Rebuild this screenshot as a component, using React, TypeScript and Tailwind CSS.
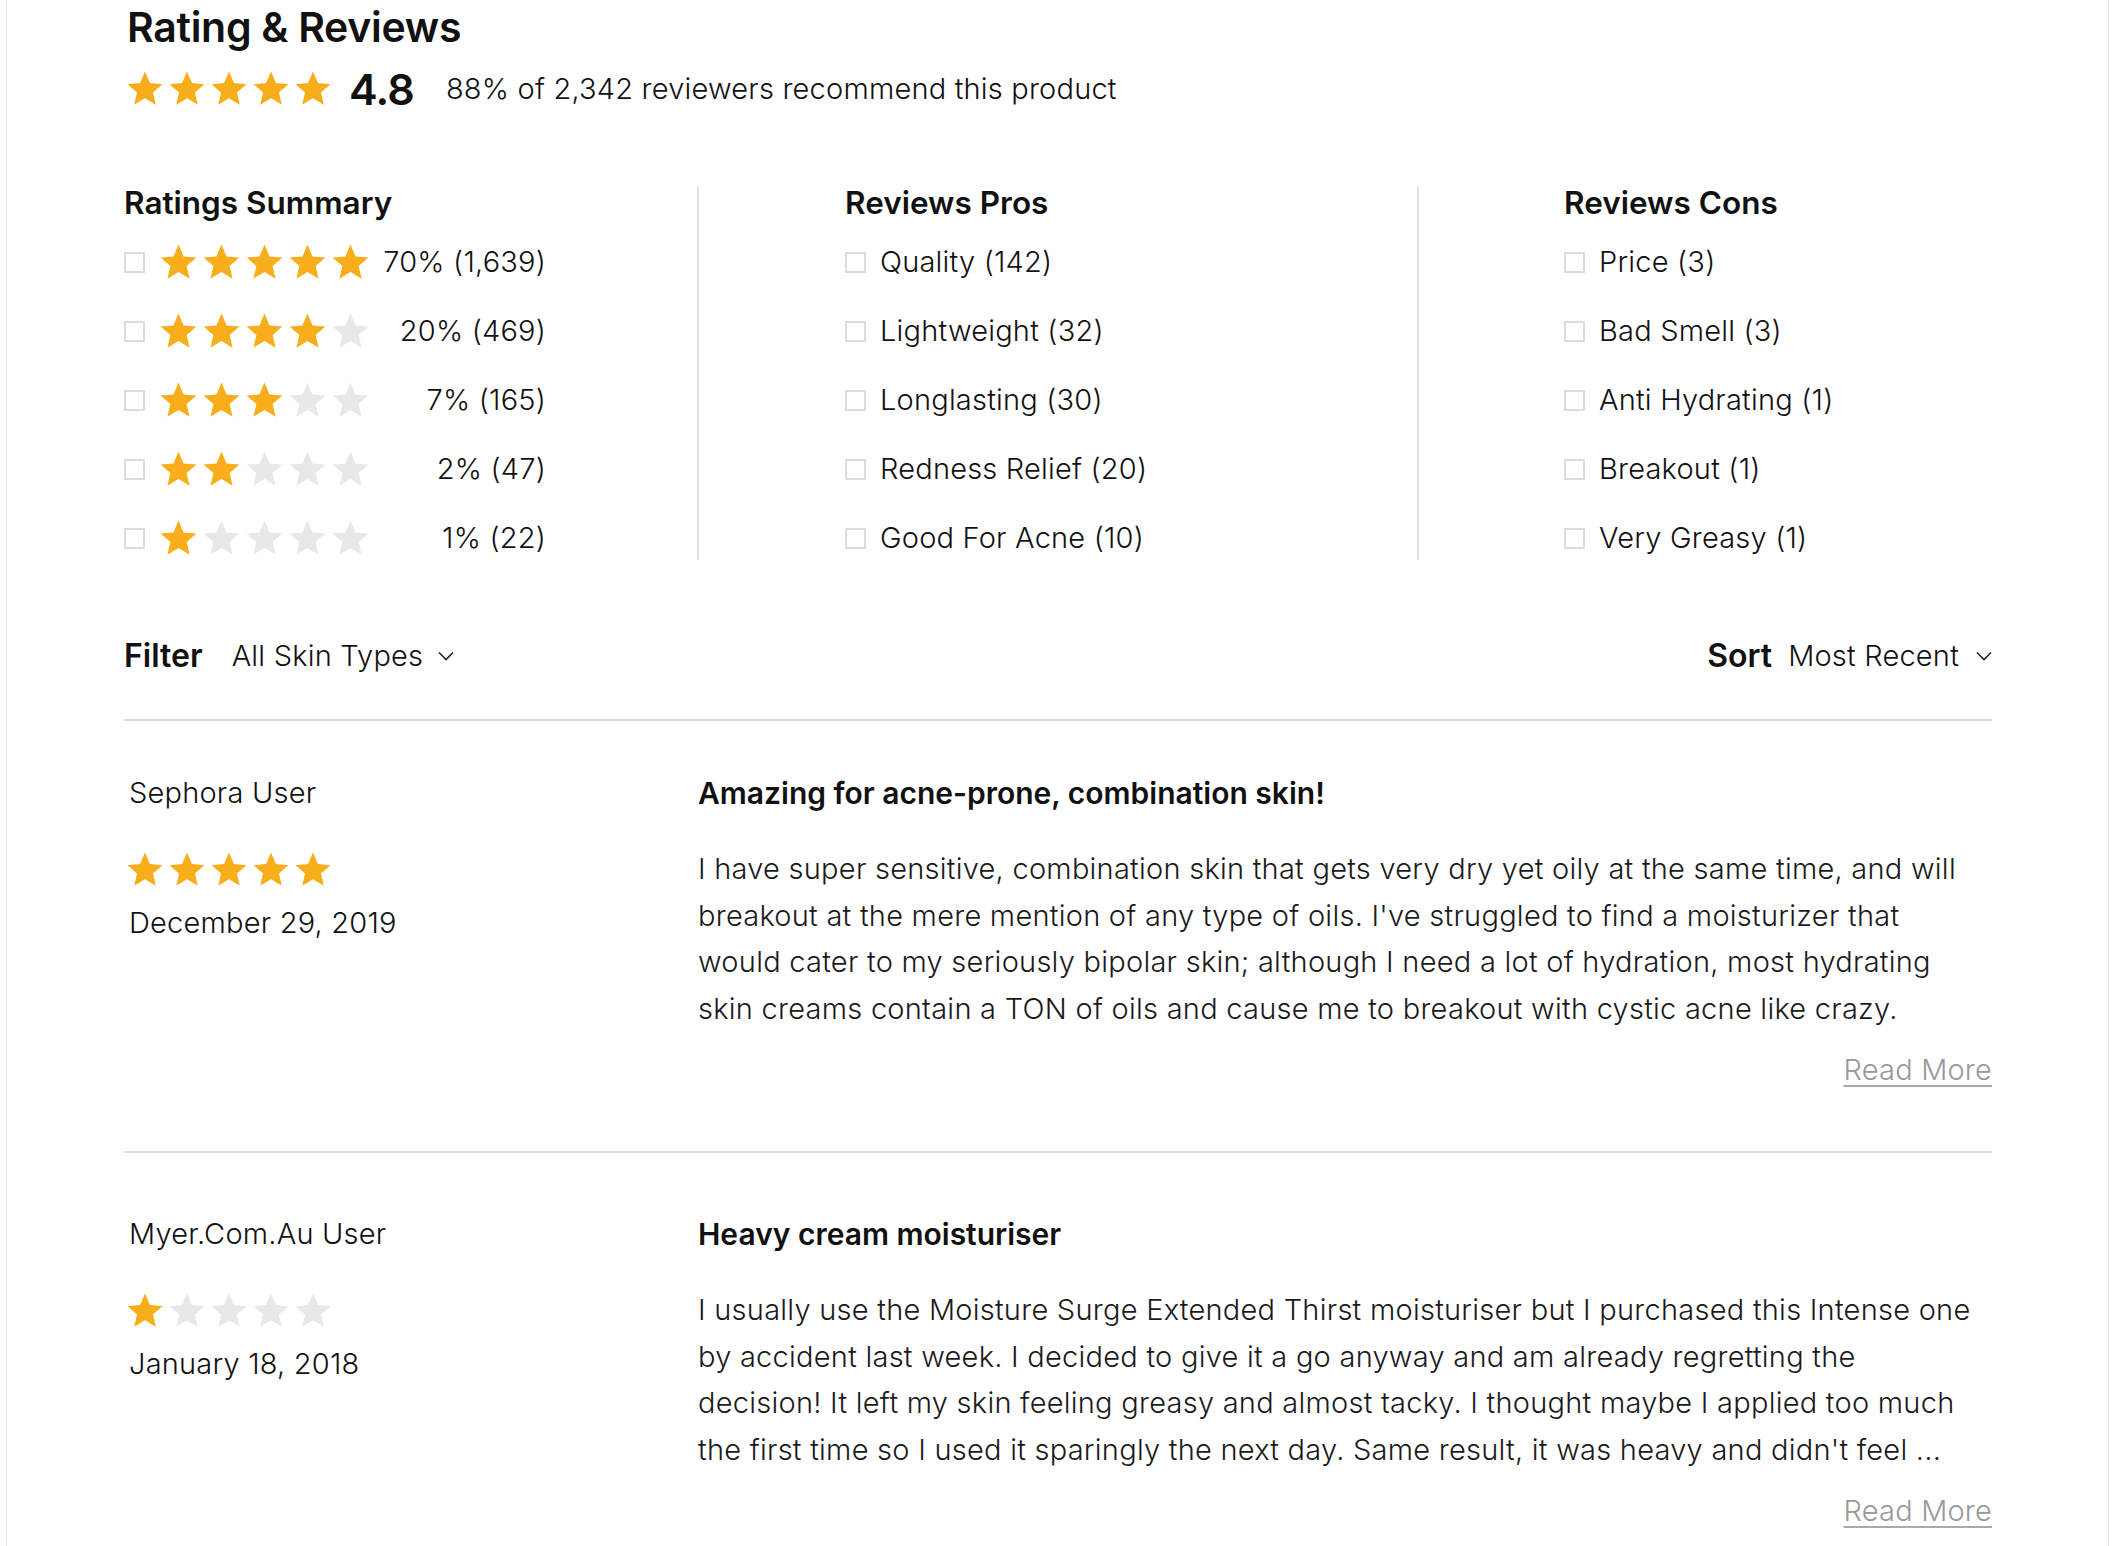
import React from "react";

const STAR_PATH =
  "M12 17.27L18.18 21l-1.64-7.03L22 9.24l-7.19-.61L12 2 9.19 8.63 2 9.24l5.46 4.73L5.82 21z";

const Star = ({ filled, className }: { filled: boolean; className: string }) => (
  <svg viewBox="0 0 24 24" className={className}>
    <path d={STAR_PATH} fill={filled ? "#f8ae1b" : "#e8e8e8"} />
  </svg>
);

const Stars = ({ value, size = "w-[42px] h-[42px]" }: { value: number; size?: string }) => (
  <div className="flex items-center">
    {[1, 2, 3, 4, 5].map((i) => (
      <Star key={i} filled={i <= value} className={size} />
    ))}
  </div>
);

const Chevron = () => (
  <svg width="16" height="10" viewBox="0 0 16 10">
    <polyline points="1,1.5 8,8.5 15,1.5" fill="none" stroke="#222" strokeWidth="1.6" />
  </svg>
);

const Box = () => <span className="block w-[21px] h-[21px] border-2 border-[#dcdcdc] shrink-0" />;

const summary = [
  { stars: 5, label: "70% (1,639)" },
  { stars: 4, label: "20% (469)" },
  { stars: 3, label: "7% (165)" },
  { stars: 2, label: "2% (47)" },
  { stars: 1, label: "1% (22)" },
];

const pros = ["Quality (142)", "Lightweight (32)", "Longlasting (30)", "Redness Relief (20)", "Good For Acne (10)"];
const cons = ["Price (3)", "Bad Smell (3)", "Anti Hydrating (1)", "Breakout (1)", "Very Greasy (1)"];

const reviews = [
  {
    user: "Sephora User",
    rating: 5,
    date: "December 29, 2019",
    title: "Amazing for acne-prone, combination skin!",
    lines: [
      "I have super sensitive, combination skin that gets very dry yet oily at the same time, and will",
      "breakout at the mere mention of any type of oils. I've struggled to find a moisturizer that",
      "would cater to my seriously bipolar skin; although I need a lot of hydration, most hydrating",
      "skin creams contain a TON of oils and cause me to breakout with cystic acne like crazy.",
    ],
    pad: "pt-[52px] pb-[57px] border-b-2 border-[#e0e0e0]",
  },
  {
    user: "Myer.Com.Au User",
    rating: 1,
    date: "January 18, 2018",
    title: "Heavy cream moisturiser",
    lines: [
      "I usually use the Moisture Surge Extended Thirst moisturiser but I purchased this Intense one",
      "by accident last week. I decided to give it a go anyway and am already regretting the",
      "decision! It left my skin feeling greasy and almost tacky. I thought maybe I applied too much",
      "the first time so I used it sparingly the next day. Same result, it was heavy and didn't feel ...",
    ],
    pad: "pt-[61px]",
  },
];

const CheckList = ({ items }: { items: string[] }) => (
  <div className="mt-[24px] flex flex-col gap-[33px]">
    {items.map((t) => (
      <div key={t} className="flex h-[36px] items-center gap-[14px]">
        <Box />
        <span className="text-[29px] font-light tracking-[0.2px]">{t}</span>
      </div>
    ))}
  </div>
);

export default function App() {
  return (
    <div className="min-h-screen bg-white font-['Inter',sans-serif] text-[#111]">
      <div className="ml-[6px] mr-[7px] min-h-[1546px] border-x border-[#e6e6e6] pl-[117px] pr-[116px]">
        {/* Heading */}
        <h1 className="pl-[3px] text-[41px] font-semibold leading-[54px] tracking-[-0.3px]">Rating &amp; Reviews</h1>
        <div className="mt-[13px] flex h-[44px] items-center">
          <Stars value={5} />
          <span className="ml-[15px] text-[43px] font-semibold tracking-[-0.8px]">4.8</span>
          <span className="ml-[32px] text-[29px] font-light tracking-[0.2px]">88% of 2,342 reviewers recommend this product</span>
        </div>

        {/* Summary columns */}
        <div className="mt-[75px] flex h-[374px]">
          <div className="w-[575px] border-r-2 border-[#e2e2e2]">
            <h2 className="text-[31.5px] font-semibold leading-[34px]">Ratings Summary</h2>
            <div className="mt-[24px] flex flex-col gap-[33px]">
              {summary.map((r) => (
                <div key={r.label} className="flex h-[36px] items-center">
                  <Box />
                  <div className="ml-[12px]">
                    <Stars value={r.stars} size="w-[43px] h-[43px]" />
                  </div>
                  <span className="w-[174px] text-right text-[29px] font-light tracking-[0.2px]">{r.label}</span>
                </div>
              ))}
            </div>
          </div>
          <div className="w-[720px] border-r-2 border-[#e2e2e2] pl-[146px]">
            <h2 className="text-[31.5px] font-semibold leading-[34px]">Reviews Pros</h2>
            <CheckList items={pros} />
          </div>
          <div className="pl-[145px]">
            <h2 className="text-[31.5px] font-semibold leading-[34px]">Reviews Cons</h2>
            <CheckList items={cons} />
          </div>
        </div>

        {/* Filter / sort */}
        <div className="mt-[76px] border-b-2 border-[#dcdcdc] pb-[43px]">
          <div className="flex h-[40px] items-center justify-between">
            <div className="flex items-center">
              <span className="text-[32px] font-semibold">Filter</span>
              <span className="ml-[29px] text-[29px] font-light tracking-[0.2px]">All Skin Types</span>
              <span className="ml-[15px]">
                <Chevron />
              </span>
            </div>
            <div className="flex items-center">
              <span className="text-[32px] font-semibold">Sort</span>
              <span className="ml-[16px] text-[29px] font-light tracking-[0.2px]">Most Recent</span>
              <span className="ml-[17px]">
                <Chevron />
              </span>
            </div>
          </div>
        </div>

        {/* Reviews */}
        {reviews.map((r) => (
          <div key={r.user} className={`flex ${r.pad}`}>
            <div className="w-[574px] shrink-0 pl-[5px]">
              <div className="text-[29px] font-light leading-[40px] tracking-[0.2px]">{r.user}</div>
              <div className="mt-[37px] flex h-[40px] items-center -ml-[5px]">
                <Stars value={r.rating} />
              </div>
              <div className="mt-[13px] text-[29px] font-light leading-[40px] tracking-[0.2px]">{r.date}</div>
            </div>
            <div className="flex-1">
              <h3 className="text-[30px] font-semibold leading-[40px]">{r.title}</h3>
              <p className="mt-[33px] text-[29px] font-light leading-[46.5px] tracking-[0.25px] text-[#1a1a1a]">
                {r.lines.map((l, i) => (
                  <React.Fragment key={i}>
                    {l}
                    {i < r.lines.length - 1 && <br />}
                  </React.Fragment>
                ))}
              </p>
              <div className="mt-[18px] text-right leading-[40px]">
                <a className="text-[29px] font-light tracking-[0.2px] text-[#999] underline decoration-[#aaa] underline-offset-[5px]">
                  Read More
                </a>
              </div>
            </div>
          </div>
        ))}
      </div>
    </div>
  );
}
